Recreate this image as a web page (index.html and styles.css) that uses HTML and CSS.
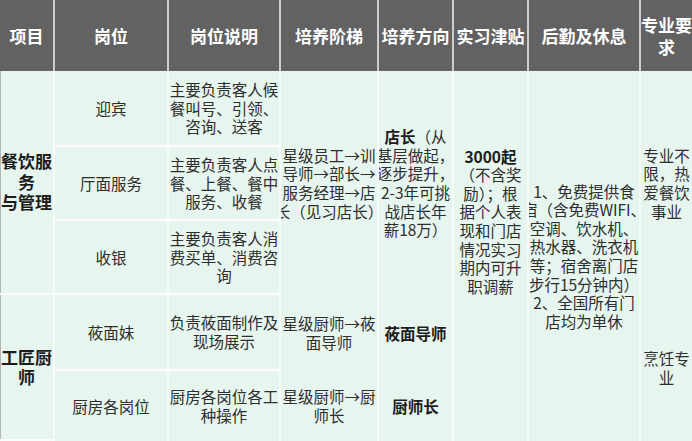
FILE: index.html
```html
<!DOCTYPE html>
<html lang="zh-CN">
<head>
<meta charset="utf-8">
<title>岗位培养表</title>
<link rel="stylesheet" href="styles.css">
</head>
<body>
<div class="sheet">
  <div class="th"><p class="t">项目</p></div>
  <div class="th"><p class="t">岗位</p></div>
  <div class="th"><p class="t">岗位说明</p></div>
  <div class="th"><p class="t">培养阶梯</p></div>
  <div class="th"><p class="t">培养方向</p></div>
  <div class="th"><p class="t">实习津贴</p></div>
  <div class="th"><p class="t">后勤及休息</p></div>
  <div class="th last"><p class="t">专业要<br>求</p></div>

  <div class="td cat span3 hl"><p class="t">餐饮服<br>务<br>与管理</p></div>
  <div class="td hl"><p class="t">迎宾</p></div>
  <div class="td hl"><p class="t">主要负责客人候<br>餐叫号、引领、<br>咨询、送客</p></div>
  <div class="td span3"><p class="t">星级员工→训<br>导师→部长→<br>服务经理→店<br>长（见习店长）</p></div>
  <div class="td span3"><p class="t"><b>店长</b>（从<br>基层做起，<br>逐步提升，<br>2-3年可挑<br>战店长年<br>薪18万）</p></div>
  <div class="td span4"><p class="t"><b>3000起</b><br>（不含奖<br>励）；根<br>据个人表<br>现和门店<br>情况实习<br>期内可升<br>职调薪</p></div>
  <div class="td span5"><p class="t">1、免费提供食<br>宿（含免费WIFI、<br>空调、饮水机、<br>热水器、洗衣机<br>等；宿舍离门店<br>步行15分钟内）<br>2、全国所有门<br>店均为单休</p></div>
  <div class="td span3 last"><p class="t">专业不<br>限，热<br>爱餐饮<br>事业</p></div>

  <div class="td hl"><p class="t">厅面服务</p></div>
  <div class="td hl"><p class="t">主要负责客人点<br>餐、上餐、餐中<br>服务、收餐</p></div>

  <div class="td hl"><p class="t">收银</p></div>
  <div class="td hl"><p class="t">主要负责客人消<br>费买单、消费咨<br>询</p></div>

  <div class="td cat span2"><p class="t">工匠厨<br>师</p></div>
  <div class="td hl"><p class="t">莜面妹</p></div>
  <div class="td hl"><p class="t">负责莜面制作及<br>现场展示</p></div>
  <div class="td"><p class="t">星级厨师→莜<br>面导师</p></div>
  <div class="td"><p class="t"><b>莜面导师</b></p></div>
  <div class="td span2 last"><p class="t">烹饪专<br>业</p></div>

  <div class="td"><p class="t">厨房各岗位</p></div>
  <div class="td"><p class="t">厨房各岗位各工<br>种操作</p></div>
  <div class="td"><p class="t">星级厨师→厨<br>师长</p></div>
  <div class="td"><p class="t"><b>厨师长</b></p></div>
  <div class="td"><p class="t"></p></div>
</div>
</body>
</html>
```

FILE: styles.css
```css
html, body {
  margin: 0;
  padding: 0;
  background: #ffffff;
  overflow: hidden;
}

body {
  font-family: "Noto Sans CJK SC", "Noto Sans", sans-serif;
  color: #2e2e2e;
}

.sheet {
  display: grid;
  grid-template-columns: 55px 114px 112px 98px 75px 75px 112px 51px;
  grid-template-rows: 71px 76px 74px 74px 76px 70px;
  width: 692px;
  height: 441px;
}

.th,
.td {
  box-sizing: border-box;
  display: flex;
  flex-direction: column;
  align-items: center;
  justify-content: center;
  overflow: hidden;
  min-width: 0;
}

.th {
  background: #626262;
  color: #ffffff;
  font-weight: 700;
  font-size: 17px;
  line-height: 21.5px;
  border-right: 2px solid #cdcdcd;
}

.td {
  background: #e6f5ee;
  font-size: 15.5px;
  line-height: 18.6px;
  border-right: 2px solid #f6fbf8;
}

.th.last,
.td.last {
  border-right: none;
}

.hl {
  border-bottom: 2px solid #fbfdfc;
}

.cat {
  font-weight: 700;
  font-size: 17px;
  line-height: 20.5px;
  color: #1c1c1c;
  box-shadow: inset 1px 0 0 #b4b4b4;
  border-bottom: 2px solid #fbfdfc;
}

.span2 { grid-row: span 2; }
.span3 { grid-row: span 3; }
.span4 { grid-row: span 4; }
.span5 { grid-row: span 5; }

.t {
  margin: 0;
  white-space: nowrap;
  text-align: center;
}

.t b {
  font-weight: 700;
  color: #1c1c1c;
}
```
